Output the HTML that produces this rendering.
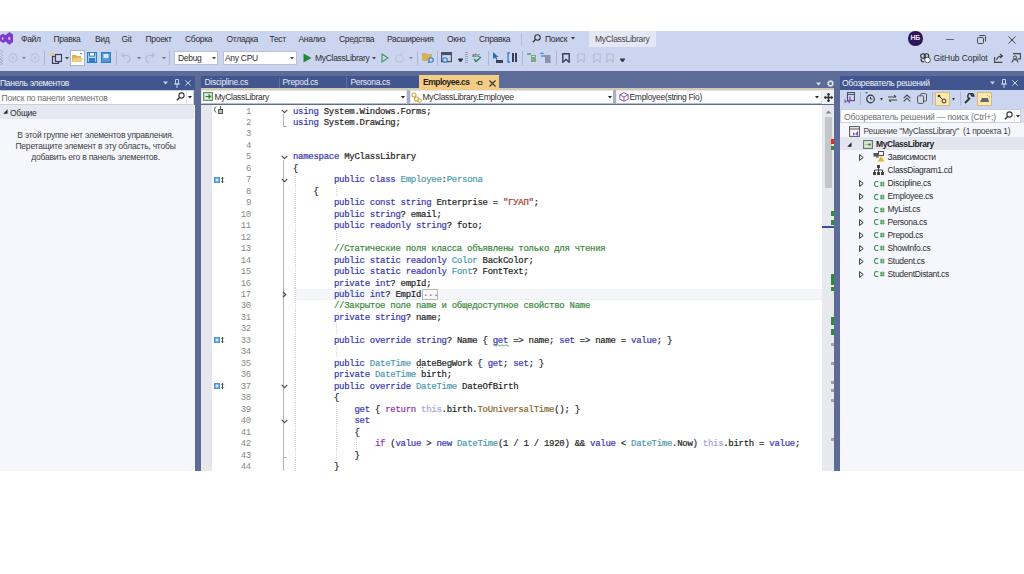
<!DOCTYPE html><html><head><meta charset="utf-8"><style>
*{margin:0;padding:0;box-sizing:border-box}
html,body{width:1024px;height:574px;overflow:hidden;background:#fff}
body{position:relative;font-family:"Liberation Sans",sans-serif}
div,svg{position:absolute}
.t{white-space:pre}
.code{font-family:"Liberation Mono",monospace;white-space:pre}
</style></head><body>

<div style="left:0px;top:31px;width:1024px;height:40px;background:#ccd5f0;"></div>
<div style="left:0px;top:71px;width:1024px;height:400px;background:#5d6b99;"></div>
<svg style="left:0;top:32px" width="14" height="13" viewBox="0 0 14 13"><path d="M9.5 0 L13 2.5 L13 10 L9.5 12.7 L6 10 L5.5 9.5 L3.3 11 L0 9 L0 3.5 L3.3 1.7 L5.5 3.2 L6 2.7 Z" fill="#7d3cc8"/><ellipse cx="9.3" cy="6.4" rx="1.2" ry="1.6" fill="#d9a8f5"/><ellipse cx="2.6" cy="6.4" rx="0.9" ry="1.5" fill="#d0b0f0"/></svg>
<div class="t" style="left:21px;top:34.90px;font-size:8.5px;line-height:8.5px;letter-spacing:-0.3px;color:#2d2d2d;">Файл</div>
<div class="t" style="left:53.5px;top:34.90px;font-size:8.5px;line-height:8.5px;letter-spacing:-0.3px;color:#2d2d2d;">Правка</div>
<div class="t" style="left:95px;top:34.90px;font-size:8.5px;line-height:8.5px;letter-spacing:-0.3px;color:#2d2d2d;">Вид</div>
<div class="t" style="left:121.5px;top:34.90px;font-size:8.5px;line-height:8.5px;letter-spacing:-0.3px;color:#2d2d2d;">Git</div>
<div class="t" style="left:145.5px;top:34.90px;font-size:8.5px;line-height:8.5px;letter-spacing:-0.3px;color:#2d2d2d;">Проект</div>
<div class="t" style="left:185px;top:34.90px;font-size:8.5px;line-height:8.5px;letter-spacing:-0.3px;color:#2d2d2d;">Сборка</div>
<div class="t" style="left:226.5px;top:34.90px;font-size:8.5px;line-height:8.5px;letter-spacing:-0.3px;color:#2d2d2d;">Отладка</div>
<div class="t" style="left:269.5px;top:34.90px;font-size:8.5px;line-height:8.5px;letter-spacing:-0.3px;color:#2d2d2d;">Тест</div>
<div class="t" style="left:298.5px;top:34.90px;font-size:8.5px;line-height:8.5px;letter-spacing:-0.3px;color:#2d2d2d;">Анализ</div>
<div class="t" style="left:339px;top:34.90px;font-size:8.5px;line-height:8.5px;letter-spacing:-0.3px;color:#2d2d2d;">Средства</div>
<div class="t" style="left:387px;top:34.90px;font-size:8.5px;line-height:8.5px;letter-spacing:-0.3px;color:#2d2d2d;">Расширения</div>
<div class="t" style="left:447px;top:34.90px;font-size:8.5px;line-height:8.5px;letter-spacing:-0.3px;color:#2d2d2d;">Окно</div>
<div class="t" style="left:479px;top:34.90px;font-size:8.5px;line-height:8.5px;letter-spacing:-0.3px;color:#2d2d2d;">Справка</div>
<div style="left:521px;top:33px;width:1px;height:12px;background:#b4bcd6;"></div>
<svg style="left:532px;top:34px" width="9" height="9" viewBox="0 0 9 9"><circle cx="5.5" cy="3.5" r="2.7" fill="none" stroke="#333" stroke-width="1.1"/><path d="M3.6 5.4 L0.8 8.2" stroke="#333" stroke-width="1.3"/></svg>
<div class="t" style="left:545px;top:34.90px;font-size:8.5px;line-height:8.5px;letter-spacing:-0.3px;color:#2d2d2d;">Поиск</div>
<svg style="left:571px;top:37px" width="4" height="3"><path d="M0 0H4L2 2.5Z" fill="#333"/></svg>
<div style="left:589px;top:31px;width:67px;height:16px;background:#e4e8f6;"></div>
<div class="t" style="left:595px;top:35.00px;font-size:8.5px;line-height:8.5px;letter-spacing:-0.3px;color:#454545;">MyClassLibrary</div>
<div style="left:908px;top:31px;width:14.5px;height:14.5px;border-radius:50%;background:#2f1456;color:#e8e0f0;font-size:7px;font-weight:bold;line-height:14.5px;text-align:center;letter-spacing:-0.3px">НБ</div>
<div style="left:946px;top:38.5px;width:7.5px;height:1.2px;background:#666;"></div>
<svg style="left:977px;top:35px" width="9" height="9" viewBox="0 0 9 9"><rect x="0.5" y="2.5" width="6" height="6" rx="1" fill="none" stroke="#444"/><path d="M2.5 0.5H7.5Q8.5 .5 8.5 1.5V6.5" fill="none" stroke="#444"/></svg>
<svg style="left:1008px;top:36px" width="8" height="8" viewBox="0 0 8 8"><path d="M0.5 .5L7.5 7.5M7.5 .5L.5 7.5" stroke="#444" stroke-width="1"/></svg>
<div style="left:0;top:50px;width:3px;height:15px;background:repeating-linear-gradient(45deg,#aab2cc 0 1px,transparent 1px 2px)"></div>
<svg style="left:8px;top:53px" width="10" height="10"><circle cx="5" cy="5" r="4.2" fill="none" stroke="#b9bfd2" stroke-width="1"/><circle cx="5" cy="5" r="1.4" fill="#b9bfd2"/></svg>
<svg style="left:22px;top:57px" width="4" height="3"><path d="M0 0H4L2 2.5Z" fill="#888"/></svg>
<svg style="left:30px;top:53px" width="10" height="10"><circle cx="5" cy="5" r="4.2" fill="none" stroke="#b9bfd2" stroke-width="1"/><circle cx="5" cy="5" r="1.4" fill="#b9bfd2"/></svg>
<div style="left:44px;top:51px;width:1px;height:14px;background:#aeb6d2;"></div>
<svg style="left:50px;top:52px" width="12" height="12" viewBox="0 0 12 12"><circle cx="2.5" cy="2.5" r="2" fill="#e7c77c"/><rect x="2.5" y="4.5" width="6" height="7" fill="none" stroke="#3b3b5a" stroke-width="1.2"/><rect x="5.5" y="2.5" width="6" height="7" fill="#cfd6ee" stroke="#3b3b5a" stroke-width="1.2"/></svg>
<svg style="left:65px;top:57px" width="4" height="3"><path d="M0 0H4L2 2.5Z" fill="#444"/></svg>
<div style="left:70px;top:50px;width:15px;height:16px;background:#fdfdfd;border:1px solid #a9b3d0"></div>
<svg style="left:72px;top:53px" width="11" height="10" viewBox="0 0 11 10"><path d="M0 2H4L5 3H9V9H0Z" fill="#d8b45a"/><path d="M1 5H11L9 9H0Z" fill="#efcf7a"/><path d="M8 0 L10 1" stroke="#1f6fb5" stroke-width="1"/></svg>
<svg style="left:87px;top:52px" width="10" height="11" viewBox="0 0 10 11"><rect x="0.6" y="0.6" width="8.8" height="9.8" fill="#c6dcf2" stroke="#2b7fc8" stroke-width="1.2"/><rect x="2.5" y="0.6" width="5" height="3.5" fill="#fff" stroke="#2b7fc8" stroke-width="1"/><rect x="2" y="6" width="6" height="4.4" fill="#2b7fc8"/></svg>
<svg style="left:101px;top:52px" width="10" height="11" viewBox="0 0 10 11"><rect x="0.6" y="0.6" width="8.8" height="9.8" fill="#5d9ad6" stroke="#2b7fc8" stroke-width="1.2"/><rect x="2.5" y="2" width="5" height="4" fill="#d9e8f7"/></svg>
<div style="left:116px;top:51px;width:1px;height:14px;background:#aeb6d2;"></div>
<svg style="left:121px;top:52px" width="10" height="11" viewBox="0 0 10 11"><path d="M3 1 L0.8 3.5 L3.5 5.5 M1 3.5 H5.5 Q9 3.5 9 7 Q9 10 5.5 10.5" fill="none" stroke="#b4bad0" stroke-width="1.2"/></svg>
<svg style="left:137px;top:57px" width="4" height="3"><path d="M0 0H4L2 2.5Z" fill="#777"/></svg>
<svg style="left:145px;top:52px" width="10" height="11" viewBox="0 0 10 11"><path d="M7 1 L9.2 3.5 L6.5 5.5 M9 3.5 H4.5 Q1 3.5 1 7 Q1 10 4.5 10.5" fill="none" stroke="#b4bad0" stroke-width="1.2"/></svg>
<svg style="left:162px;top:57px" width="4" height="3"><path d="M0 0H4L2 2.5Z" fill="#777"/></svg>
<div style="left:169px;top:51px;width:1px;height:14px;background:#aeb6d2;"></div>
<div style="left:174px;top:51px;width:44px;height:14px;background:#fff;border:1px solid #b9c0d8"></div>
<div class="t" style="left:178px;top:54.30px;font-size:8.5px;line-height:8.5px;letter-spacing:-0.3px;color:#2d2d2d;">Debug</div>
<svg style="left:211.5px;top:57px" width="4" height="3"><path d="M0 0H4L2 2.5Z" fill="#444"/></svg>
<div style="left:222.5px;top:51px;width:74px;height:14px;background:#fff;border:1px solid #b9c0d8"></div>
<div class="t" style="left:225px;top:54.30px;font-size:8.5px;line-height:8.5px;letter-spacing:-0.3px;color:#2d2d2d;">Any CPU</div>
<svg style="left:290px;top:57px" width="4" height="3"><path d="M0 0H4L2 2.5Z" fill="#444"/></svg>
<svg style="left:302.5px;top:53px" width="9" height="10"><path d="M0.5 0.5 L8.5 5 L0.5 9.5Z" fill="#1f8a3a"/></svg>
<div class="t" style="left:315px;top:54.30px;font-size:8.5px;line-height:8.5px;letter-spacing:-0.3px;color:#2d2d2d;">MyClassLibrary</div>
<svg style="left:372px;top:57px" width="4" height="3"><path d="M0 0H4L2 2.5Z" fill="#444"/></svg>
<svg style="left:380.5px;top:53px" width="8" height="10"><path d="M1 1 L7 5 L1 9Z" fill="none" stroke="#3a9a55" stroke-width="1.1"/></svg>
<svg style="left:395px;top:52px" width="10" height="11"><circle cx="4.5" cy="6.5" r="3.8" fill="none" stroke="#c1c6d6" stroke-width="1.6"/><path d="M5 3 L8 0" stroke="#c1c6d6" stroke-width="1.3"/></svg>
<svg style="left:409px;top:57px" width="4" height="3"><path d="M0 0H4L2 2.5Z" fill="#888"/></svg>
<div style="left:417px;top:51px;width:1px;height:14px;background:#aeb6d2;"></div>
<svg style="left:421.5px;top:52px" width="12" height="11" viewBox="0 0 12 11"><path d="M0 1H4L5 2H10V9H0Z" fill="#d7b15a"/><circle cx="9" cy="8" r="2.2" fill="#ccd5f0" stroke="#2b7fc8" stroke-width="1.1"/><path d="M7.3 9.7 L6 11" stroke="#2b7fc8" stroke-width="1.2"/></svg>
<div style="left:437px;top:51px;width:1px;height:14px;background:#aeb6d2;"></div>
<svg style="left:441px;top:52px" width="11" height="11" viewBox="0 0 11 11"><rect x="0.6" y="0.6" width="9.8" height="9" fill="none" stroke="#4b4f66" stroke-width="1.2"/><rect x="0.6" y="0.6" width="9.8" height="2.5" fill="#4b4f66"/><circle cx="4" cy="8" r="2.3" fill="#ccd5f0" stroke="#2b7fc8" stroke-width="1.1"/></svg>
<svg style="left:457.5px;top:58px" width="5" height="5"><path d="M0 0H5M0.5 1.5H4.5L2.5 4Z" stroke="#333" fill="#333" stroke-width="1"/></svg>
<div style="left:465px;top:52px;width:3px;height:12px;background:repeating-linear-gradient(#9aa3c0 0 1px,transparent 1px 2px)"></div>
<svg style="left:472px;top:53px" width="10" height="10" viewBox="0 0 10 10"><text x="0" y="4" font-size="5" font-family="Liberation Sans" fill="#444">abc</text><path d="M2 6 L4 8.5 L9 4" fill="none" stroke="#1f8a3a" stroke-width="1.3"/></svg>
<div style="left:487.5px;top:51px;width:1px;height:14px;background:#aeb6d2;"></div>
<svg style="left:492px;top:52px" width="11" height="11" viewBox="0 0 11 11"><path d="M1 0 L1 7 L3 5.5 L4.5 8 L5.5 7.5 L4.3 5 L6.5 5Z" fill="#1f6fb5"/><rect x="4" y="8" width="7" height="3" fill="#3d3d55"/></svg>
<svg style="left:506.5px;top:52px" width="11" height="11" viewBox="0 0 11 11"><path d="M3 1H1V10H3" fill="none" stroke="#2b7fc8" stroke-width="1.3"/><rect x="5" y="1" width="2" height="9" fill="#3d3d55"/><rect x="8" y="1" width="2" height="9" fill="#3d3d55"/></svg>
<div style="left:522px;top:51px;width:1px;height:14px;background:#aeb6d2;"></div>
<svg style="left:527px;top:53px" width="10" height="10" viewBox="0 0 10 10"><path d="M0 1H4" stroke="#3a9a55" stroke-width="1.3"/><rect x="4" y="2" width="5" height="7" fill="#7fa88a"/><rect x="5" y="3" width="3" height="1" fill="#cde"/></svg>
<svg style="left:540px;top:52px" width="11" height="11" viewBox="0 0 11 11"><path d="M0.5 2 Q2 0 3.5 2" fill="none" stroke="#2b7fc8" stroke-width="1.2"/><path d="M1 4H5" stroke="#2b7fc8" stroke-width="1.2"/><rect x="5" y="3" width="5.5" height="8" fill="#8c93a8"/></svg>
<div style="left:556px;top:51px;width:1px;height:14px;background:#aeb6d2;"></div>
<svg style="left:562px;top:53px" width="8" height="10" viewBox="0 0 8 10"><path d="M0.8 0.8H7.2V9.2L4 6.5L0.8 9.2Z" fill="none" stroke="#3d3d55" stroke-width="1.4"/></svg>
<svg style="left:577px;top:53px" width="9" height="10" viewBox="0 0 9 10"><path d="M0.8 0.8H7.2V9.2L4 6.5L0.8 9.2Z" fill="none" stroke="#b9bfd2" stroke-width="1.3"/></svg>
<svg style="left:592.5px;top:53px" width="9" height="10" viewBox="0 0 9 10"><path d="M0.8 0.8H7.2V9.2L4 6.5L0.8 9.2Z" fill="none" stroke="#b9bfd2" stroke-width="1.3"/></svg>
<svg style="left:606px;top:53px" width="9" height="10" viewBox="0 0 9 10"><path d="M0.8 0.8H7.2V9.2L4 6.5L0.8 9.2Z" fill="none" stroke="#b9bfd2" stroke-width="1.3"/></svg>
<svg style="left:620px;top:58px" width="5" height="5"><path d="M0 0H5M0.5 1.5H4.5L2.5 4Z" stroke="#333" fill="#333" stroke-width="1"/></svg>
<svg style="left:920px;top:53px" width="11" height="10" viewBox="0 0 11 10"><circle cx="3" cy="3" r="2.3" fill="none" stroke="#333" stroke-width="1.1"/><circle cx="6.5" cy="3" r="2.3" fill="none" stroke="#333" stroke-width="1.1"/><path d="M1 6 Q1 9 4 9" fill="none" stroke="#333" stroke-width="1.1"/><circle cx="7.5" cy="7" r="2.8" fill="#fff" stroke="#333" stroke-width="0.8"/></svg>
<div class="t" style="left:933.5px;top:54.30px;font-size:8.5px;line-height:8.5px;letter-spacing:-0.08px;color:#2d2d2d;">GitHub Copilot</div>
<svg style="left:994px;top:53px" width="10" height="10" viewBox="0 0 10 10"><path d="M0.6 4V9.4H8.4" fill="none" stroke="#444" stroke-width="1.1"/><path d="M2.5 7 Q3.5 3 8 3 M6 1 L8.5 3 L6 5" fill="none" stroke="#444" stroke-width="1.1"/></svg>
<svg style="left:1011px;top:53px" width="10" height="10" viewBox="0 0 10 10"><path d="M2 0.6H9.4V6H6" fill="none" stroke="#444" stroke-width="1.1"/><circle cx="4" cy="4.5" r="1.6" fill="none" stroke="#444" stroke-width="1"/><path d="M0.8 9.5 Q1.5 6.5 4 6.5 Q6.5 6.5 7 9.5" fill="none" stroke="#444" stroke-width="1.1"/></svg>
<div style="left:0px;top:76px;width:195px;height:14px;background:#41558f;"></div>
<div class="t" style="left:0px;top:78.80px;font-size:8.5px;line-height:8.5px;letter-spacing:-0.3px;color:#f0f3fa;">Панель элементов</div>
<svg style="left:163px;top:81px" width="5" height="4"><path d="M0 0.5H5L2.5 3.5Z" fill="#c9d1ea"/></svg>
<svg style="left:173.5px;top:79px" width="6" height="9" viewBox="0 0 6 9"><path d="M1.5 0.5H4.5V5H1.5Z M0 5H6 M3 5V9" fill="none" stroke="#c9d1ea" stroke-width="1"/></svg>
<svg style="left:184.5px;top:80px" width="6" height="6"><path d="M0.3 .3L5.7 5.7M5.7 .3L.3 5.7" stroke="#c9d1ea" stroke-width="1"/></svg>
<div style="left:0px;top:90px;width:194px;height:14.5px;background:#ffffff;border:1px solid #c9cfde;border-left:none"></div>
<div class="t" style="left:1.5px;top:93.60px;font-size:8.5px;line-height:8.5px;letter-spacing:-0.17px;color:#6d6d6d;">Поиск по панели элементов</div>
<svg style="left:176px;top:92px" width="9" height="9" viewBox="0 0 9 9"><circle cx="5.5" cy="3.5" r="2.6" fill="none" stroke="#333" stroke-width="1.1"/><path d="M3.6 5.4 L0.8 8.2" stroke="#333" stroke-width="1.4"/></svg>
<div style="left:185.5px;top:91px;width:1px;height:12.5px;background:#e1e4ec;"></div>
<svg style="left:187.5px;top:96px" width="4" height="3"><path d="M0 0H4L2 2.5Z" fill="#222"/></svg>
<div style="left:0px;top:104.5px;width:195px;height:366.5px;background:#f5f7fd;"></div>
<div style="left:0px;top:105px;width:194px;height:14px;background:#e5e8f0;"></div>
<svg style="left:3px;top:109px" width="5" height="5"><path d="M4.5 0.3V4.7H0.3Z" fill="#222"/></svg>
<div class="t" style="left:10px;top:108.50px;font-size:8.5px;line-height:8.5px;letter-spacing:-0.3px;color:#2d2d2d;">Общие</div>
<div class="t" style="left:0;width:191px;text-align:center;top:131.10px;font-size:8.5px;line-height:8.5px;letter-spacing:-0.21px;color:#3c3c3c">В этой группе нет элементов управления.</div>
<div class="t" style="left:0;width:191px;text-align:center;top:141.80px;font-size:8.5px;line-height:8.5px;letter-spacing:-0.21px;color:#3c3c3c">Перетащите элемент в эту область, чтобы</div>
<div class="t" style="left:0;width:191px;text-align:center;top:152.60px;font-size:8.5px;line-height:8.5px;letter-spacing:-0.21px;color:#3c3c3c">добавить его в панель элементов.</div>
<div style="left:201px;top:76px;width:78px;height:13px;background:#41558f;"></div>
<div class="t" style="left:204.5px;top:77.60px;font-size:8.5px;line-height:8.5px;letter-spacing:-0.3px;color:#e8ecf7;">Discipline.cs</div>
<div style="left:279px;top:76px;width:67px;height:13px;background:#41558f;"></div>
<div class="t" style="left:282.5px;top:77.60px;font-size:8.5px;line-height:8.5px;letter-spacing:-0.3px;color:#e8ecf7;">Prepod.cs</div>
<div style="left:346px;top:76px;width:73px;height:13px;background:#41558f;"></div>
<div class="t" style="left:350.5px;top:77.60px;font-size:8.5px;line-height:8.5px;letter-spacing:-0.3px;color:#e8ecf7;">Persona.cs</div>
<div style="left:279px;top:77px;width:1px;height:11px;background:#5d6ea0;"></div>
<div style="left:346px;top:77px;width:1px;height:11px;background:#5d6ea0;"></div>
<div style="left:419px;top:75px;width:80px;height:15px;background:#f5cc84;"></div>
<div class="t" style="left:423px;top:77.80px;font-size:8.5px;line-height:8.5px;letter-spacing:-0.5px;color:#1e1e1e;font-weight:bold">Employee.cs</div>
<svg style="left:476px;top:80px" width="7" height="6" viewBox="0 0 7 6"><path d="M0 3H2.5 M2.5 1V5 M2.5 1.5H6V4.5H2.5" fill="none" stroke="#333" stroke-width="0.9"/></svg>
<svg style="left:488.5px;top:79.5px" width="7" height="7"><path d="M0.5 .5L6.5 6.5M6.5 .5L.5 6.5" stroke="#333" stroke-width="1.1"/></svg>
<div style="left:201px;top:88.2px;width:633px;height:1.5px;background:#d2c9b0;"></div>
<svg style="left:816px;top:81.5px" width="5" height="4"><path d="M0 0.5H5L2.5 3.5Z" fill="#dfe4f3"/></svg>
<svg style="left:827px;top:79.5px" width="7" height="7" viewBox="0 0 7 7"><circle cx="3.5" cy="3.5" r="2.2" fill="none" stroke="#dfe4f3" stroke-width="1.4"/><circle cx="3.5" cy="3.5" r="3.2" fill="none" stroke="#dfe4f3" stroke-width="0.8" stroke-dasharray="1 1"/></svg>
<div style="left:419px;top:88.3px;width:80px;height:1.4px;background:#f5cc84;"></div>
<div style="left:201px;top:89.7px;width:633px;height:14.8px;background:#eef0f6;"></div>
<div style="left:201px;top:89.7px;width:206px;height:14.3px;background:#fff;border:1px solid #e3e6ee;border-bottom-color:#b9bdc8"></div>
<svg style="left:203px;top:92px" width="10" height="9" viewBox="0 0 10 9"><rect x="0.6" y="0.6" width="8.8" height="7.8" fill="#dfeadf" stroke="#5a8a5a" stroke-width="1.1"/><path d="M2.5 4.5H7.5 M5.5 2.5L7.5 4.5L5.5 6.5" fill="none" stroke="#2f7d32" stroke-width="1.1"/></svg>
<div class="t" style="left:214.5px;top:92.60px;font-size:8.5px;line-height:8.5px;letter-spacing:-0.3px;color:#2d2d2d;">MyClassLibrary</div>
<svg style="left:400.5px;top:96px" width="4" height="3"><path d="M0 0H4L2 2.5Z" fill="#222"/></svg>
<div style="left:407px;top:89.7px;width:2.5px;height:14.8px;background:#a9b0c6;"></div>
<div style="left:409.5px;top:89.7px;width:204px;height:14.3px;background:#fff;border:1px solid #e3e6ee;border-bottom-color:#b9bdc8"></div>
<svg style="left:411px;top:91.5px" width="11" height="11" viewBox="0 0 11 11"><circle cx="3" cy="3" r="2" fill="none" stroke="#c9a93a" stroke-width="1.1"/><circle cx="5.5" cy="7" r="2" fill="none" stroke="#c9a93a" stroke-width="1.1"/><circle cx="8.5" cy="8.5" r="1.8" fill="none" stroke="#c9a93a" stroke-width="1.1"/></svg>
<div class="t" style="left:422.5px;top:92.60px;font-size:8.5px;line-height:8.5px;letter-spacing:-0.3px;color:#2d2d2d;">MyClassLibrary.Employee</div>
<svg style="left:607.5px;top:96px" width="4" height="3"><path d="M0 0H4L2 2.5Z" fill="#222"/></svg>
<div style="left:613px;top:89.7px;width:3px;height:14.8px;background:#a9b0c6;"></div>
<div style="left:616px;top:89.7px;width:205.5px;height:14.3px;background:#fff;border:1px solid #e3e6ee;border-bottom-color:#b9bdc8"></div>
<svg style="left:618.5px;top:92px" width="10" height="10" viewBox="0 0 10 10"><path d="M5 0.7L9.2 2.8V7.2L5 9.3L0.8 7.2V2.8Z M0.8 2.8L5 5L9.2 2.8 M5 5V9.3" fill="none" stroke="#8a5fb5" stroke-width="1"/></svg>
<div class="t" style="left:629.5px;top:92.60px;font-size:8.5px;line-height:8.5px;letter-spacing:-0.3px;color:#2d2d2d;">Employee(string Fio)</div>
<svg style="left:815px;top:96px" width="4" height="3"><path d="M0 0H4L2 2.5Z" fill="#222"/></svg>
<div style="left:821.5px;top:89.7px;width:12.5px;height:14.8px;background:#f0f1f5;"></div>
<svg style="left:823.5px;top:92.5px" width="9" height="9" viewBox="0 0 9 9"><path d="M4.5 0V9 M0 4.5H9" stroke="#333" stroke-width="1.6"/><path d="M4.5 0L2.8 2H6.2Z M4.5 9L2.8 7H6.2Z M0 4.5L2 2.8V6.2Z M9 4.5L7 2.8V6.2Z" fill="#333"/></svg>
<div style="left:201px;top:104.5px;width:620.5px;height:366.5px;background:#ffffff;"></div>
<div style="left:201px;top:104.5px;width:10.5px;height:366.5px;background:#e6e7ed;"></div>
<div style="left:201px;top:104.5px;width:620.5px;height:366.5px;overflow:hidden">
<div style="left:94.5px;top:184.12px;width:526.0px;height:11.6px;background:#f4f6fa;border:1px solid #eef1f6"></div>
<div style="left:94px;top:69.22px;width:1px;height:11.47px;background:repeating-linear-gradient(#d6d6d6 0 1px,transparent 1px 2px)"></div>
<div style="left:94px;top:80.69px;width:1px;height:11.47px;background:repeating-linear-gradient(#d6d6d6 0 1px,transparent 1px 2px)"></div>
<div style="left:94px;top:92.16px;width:1px;height:11.47px;background:repeating-linear-gradient(#d6d6d6 0 1px,transparent 1px 2px)"></div>
<div style="left:94px;top:103.63px;width:1px;height:11.47px;background:repeating-linear-gradient(#d6d6d6 0 1px,transparent 1px 2px)"></div>
<div style="left:94px;top:115.10px;width:1px;height:11.47px;background:repeating-linear-gradient(#d6d6d6 0 1px,transparent 1px 2px)"></div>
<div style="left:94px;top:126.57px;width:1px;height:11.47px;background:repeating-linear-gradient(#d6d6d6 0 1px,transparent 1px 2px)"></div>
<div style="left:94px;top:138.04px;width:1px;height:11.47px;background:repeating-linear-gradient(#d6d6d6 0 1px,transparent 1px 2px)"></div>
<div style="left:94px;top:149.51px;width:1px;height:11.47px;background:repeating-linear-gradient(#d6d6d6 0 1px,transparent 1px 2px)"></div>
<div style="left:94px;top:160.98px;width:1px;height:11.47px;background:repeating-linear-gradient(#d6d6d6 0 1px,transparent 1px 2px)"></div>
<div style="left:94px;top:172.45px;width:1px;height:11.47px;background:repeating-linear-gradient(#d6d6d6 0 1px,transparent 1px 2px)"></div>
<div style="left:94px;top:183.92px;width:1px;height:11.47px;background:repeating-linear-gradient(#d6d6d6 0 1px,transparent 1px 2px)"></div>
<div style="left:94px;top:195.39px;width:1px;height:11.47px;background:repeating-linear-gradient(#d6d6d6 0 1px,transparent 1px 2px)"></div>
<div style="left:94px;top:206.86px;width:1px;height:11.47px;background:repeating-linear-gradient(#d6d6d6 0 1px,transparent 1px 2px)"></div>
<div style="left:94px;top:218.33px;width:1px;height:11.47px;background:repeating-linear-gradient(#d6d6d6 0 1px,transparent 1px 2px)"></div>
<div style="left:94px;top:229.80px;width:1px;height:11.47px;background:repeating-linear-gradient(#d6d6d6 0 1px,transparent 1px 2px)"></div>
<div style="left:94px;top:241.27px;width:1px;height:11.47px;background:repeating-linear-gradient(#d6d6d6 0 1px,transparent 1px 2px)"></div>
<div style="left:94px;top:252.74px;width:1px;height:11.47px;background:repeating-linear-gradient(#d6d6d6 0 1px,transparent 1px 2px)"></div>
<div style="left:94px;top:264.21px;width:1px;height:11.47px;background:repeating-linear-gradient(#d6d6d6 0 1px,transparent 1px 2px)"></div>
<div style="left:94px;top:275.68px;width:1px;height:11.47px;background:repeating-linear-gradient(#d6d6d6 0 1px,transparent 1px 2px)"></div>
<div style="left:94px;top:287.15px;width:1px;height:11.47px;background:repeating-linear-gradient(#d6d6d6 0 1px,transparent 1px 2px)"></div>
<div style="left:94px;top:298.62px;width:1px;height:11.47px;background:repeating-linear-gradient(#d6d6d6 0 1px,transparent 1px 2px)"></div>
<div style="left:94px;top:310.09px;width:1px;height:11.47px;background:repeating-linear-gradient(#d6d6d6 0 1px,transparent 1px 2px)"></div>
<div style="left:94px;top:321.56px;width:1px;height:11.47px;background:repeating-linear-gradient(#d6d6d6 0 1px,transparent 1px 2px)"></div>
<div style="left:94px;top:333.03px;width:1px;height:11.47px;background:repeating-linear-gradient(#d6d6d6 0 1px,transparent 1px 2px)"></div>
<div style="left:94px;top:344.50px;width:1px;height:11.47px;background:repeating-linear-gradient(#d6d6d6 0 1px,transparent 1px 2px)"></div>
<div style="left:94px;top:355.97px;width:1px;height:11.47px;background:repeating-linear-gradient(#d6d6d6 0 1px,transparent 1px 2px)"></div>
<div style="left:134.5px;top:80.69px;width:1px;height:11.47px;background:repeating-linear-gradient(#d6d6d6 0 1px,transparent 1px 2px)"></div>
<div style="left:134.5px;top:126.57px;width:1px;height:11.47px;background:repeating-linear-gradient(#d6d6d6 0 1px,transparent 1px 2px)"></div>
<div style="left:134.5px;top:218.33px;width:1px;height:11.47px;background:repeating-linear-gradient(#d6d6d6 0 1px,transparent 1px 2px)"></div>
<div style="left:134.5px;top:241.27px;width:1px;height:11.47px;background:repeating-linear-gradient(#d6d6d6 0 1px,transparent 1px 2px)"></div>
<div style="left:134.5px;top:298.62px;width:1px;height:11.47px;background:repeating-linear-gradient(#d6d6d6 0 1px,transparent 1px 2px)"></div>
<div style="left:134.5px;top:310.09px;width:1px;height:11.47px;background:repeating-linear-gradient(#d6d6d6 0 1px,transparent 1px 2px)"></div>
<div style="left:134.5px;top:321.56px;width:1px;height:11.47px;background:repeating-linear-gradient(#d6d6d6 0 1px,transparent 1px 2px)"></div>
<div style="left:134.5px;top:333.03px;width:1px;height:11.47px;background:repeating-linear-gradient(#d6d6d6 0 1px,transparent 1px 2px)"></div>
<div style="left:134.5px;top:344.50px;width:1px;height:11.47px;background:repeating-linear-gradient(#d6d6d6 0 1px,transparent 1px 2px)"></div>
<div style="left:155px;top:333.03px;width:1px;height:11.47px;background:repeating-linear-gradient(#d6d6d6 0 1px,transparent 1px 2px)"></div>
<div class="code ln" style="left:44.88px;top:1.0px">1</div>
<div class="code cl" style="left:92px;top:1.0px"><span class="k">using</span> System.Windows.Forms;</div>
<div class="code ln" style="left:44.88px;top:12.469999999999999px">2</div>
<div class="code cl" style="left:92px;top:12.469999999999999px"><span class="k">using</span> System.Drawing;</div>
<div class="code ln" style="left:44.88px;top:23.939999999999998px">3</div>
<div class="code ln" style="left:44.88px;top:35.41px">4</div>
<div class="code ln" style="left:44.88px;top:46.879999999999995px">5</div>
<div class="code cl" style="left:92px;top:46.879999999999995px"><span class="k">namespace</span> MyClassLibrary</div>
<div class="code ln" style="left:44.88px;top:58.349999999999994px">6</div>
<div class="code cl" style="left:92px;top:58.349999999999994px">{</div>
<div class="code ln" style="left:44.88px;top:69.82000000000002px">7</div>
<div class="code cl" style="left:92px;top:69.82000000000002px">        <span class="k">public</span> <span class="k">class</span> <span class="ty">Employee</span>:<span class="ty">Persona</span></div>
<div class="code ln" style="left:44.88px;top:81.28999999999999px">8</div>
<div class="code cl" style="left:92px;top:81.28999999999999px">    {</div>
<div class="code ln" style="left:44.88px;top:92.76000000000002px">9</div>
<div class="code cl" style="left:92px;top:92.76000000000002px">        <span class="k">public</span> <span class="k">const</span> <span class="k">string</span> Enterprise = <span class="s">&quot;ГУАП&quot;</span>;</div>
<div class="code ln" style="left:39.76px;top:104.22999999999999px">10</div>
<div class="code cl" style="left:92px;top:104.22999999999999px">        <span class="k">public</span> <span class="k">string</span>? email;</div>
<div class="code ln" style="left:39.76px;top:115.70000000000002px">11</div>
<div class="code cl" style="left:92px;top:115.70000000000002px">        <span class="k">public</span> <span class="k">readonly</span> <span class="k">string</span>? foto;</div>
<div class="code ln" style="left:39.76px;top:127.16999999999999px">12</div>
<div class="code ln" style="left:39.76px;top:138.64000000000001px">13</div>
<div class="code cl" style="left:92px;top:138.64000000000001px">        <span class="cm">//Статические поля класса объявлены только для чтения</span></div>
<div class="code ln" style="left:39.76px;top:150.10999999999999px">14</div>
<div class="code cl" style="left:92px;top:150.10999999999999px">        <span class="k">public</span> <span class="k">static</span> <span class="k">readonly</span> <span class="ty">Color</span> BackColor;</div>
<div class="code ln" style="left:39.76px;top:161.58000000000004px">15</div>
<div class="code cl" style="left:92px;top:161.58000000000004px">        <span class="k">public</span> <span class="k">static</span> <span class="k">readonly</span> <span class="ty">Font</span>? FontText;</div>
<div class="code ln" style="left:39.76px;top:173.05000000000007px">16</div>
<div class="code cl" style="left:92px;top:173.05000000000007px">        <span class="k">private</span> <span class="k">int</span>? empId;</div>
<div class="code ln" style="left:39.76px;top:184.52000000000004px">17</div>
<div class="code cl" style="left:92px;top:184.52000000000004px">        <span class="k">public</span> <span class="k">int</span>? EmpId</div>
<div class="code ln" style="left:39.76px;top:195.99px">30</div>
<div class="code cl" style="left:92px;top:195.99px">        <span class="cm">//Закрытое поле name и общедоступное свойство Name</span></div>
<div class="code ln" style="left:39.76px;top:207.46000000000004px">31</div>
<div class="code cl" style="left:92px;top:207.46000000000004px">        <span class="k">private</span> <span class="k">string</span>? name;</div>
<div class="code ln" style="left:39.76px;top:218.93000000000006px">32</div>
<div class="code ln" style="left:39.76px;top:230.40000000000003px">33</div>
<div class="code cl" style="left:92px;top:230.40000000000003px">        <span class="k">public</span> <span class="k">override</span> <span class="k">string</span>? Name { <span class="k">get</span> =&gt; name; <span class="k">set</span> =&gt; name = <span class="k">value</span>; }</div>
<div class="code ln" style="left:39.76px;top:241.87px">34</div>
<div class="code ln" style="left:39.76px;top:253.34000000000003px">35</div>
<div class="code cl" style="left:92px;top:253.34000000000003px">        <span class="k">public</span> <span class="ty">DateTime</span> dateBegWork { <span class="k">get</span>; <span class="k">set</span>; }</div>
<div class="code ln" style="left:39.76px;top:264.81000000000006px">36</div>
<div class="code cl" style="left:92px;top:264.81000000000006px">        <span class="k">private</span> <span class="ty">DateTime</span> birth;</div>
<div class="code ln" style="left:39.76px;top:276.2800000000001px">37</div>
<div class="code cl" style="left:92px;top:276.2800000000001px">        <span class="k">public</span> <span class="k">override</span> <span class="ty">DateTime</span> DateOfBirth</div>
<div class="code ln" style="left:39.76px;top:287.75px">38</div>
<div class="code cl" style="left:92px;top:287.75px">        {</div>
<div class="code ln" style="left:39.76px;top:299.22px">39</div>
<div class="code cl" style="left:92px;top:299.22px">            <span class="k">get</span> { <span class="c">return</span> <span class="th">this</span>.birth.<span class="me">ToUniversalTime</span>(); }</div>
<div class="code ln" style="left:39.76px;top:310.69000000000005px">40</div>
<div class="code cl" style="left:92px;top:310.69000000000005px">            <span class="k">set</span></div>
<div class="code ln" style="left:39.76px;top:322.1600000000001px">41</div>
<div class="code cl" style="left:92px;top:322.1600000000001px">            {</div>
<div class="code ln" style="left:39.76px;top:333.63px">42</div>
<div class="code cl" style="left:92px;top:333.63px">                <span class="c">if</span> (<span class="k">value</span> &gt; <span class="k">new</span> <span class="ty">DateTime</span>(1 / 1 / 1920) &amp;&amp; <span class="k">value</span> &lt; <span class="ty">DateTime</span>.Now) <span class="th">this</span>.birth = <span class="k">value</span>;</div>
<div class="code ln" style="left:39.76px;top:345.1px">43</div>
<div class="code cl" style="left:92px;top:345.1px">            }</div>
<div class="code ln" style="left:39.76px;top:356.57000000000005px">44</div>
<div class="code cl" style="left:92px;top:356.57000000000005px">        }</div>
<div style="left:220.5px;top:184.42000000000002px;width:16px;height:11px;border:1px solid #b8b8b8;background:#f7f7f7"></div>
<div class="code" style="left:222px;top:183.92000000000002px;color:#777">...</div>
<svg style="left:80px;top:4.400000000000006px" width="7" height="5"><path d="M0.7 0.9L3.5 3.7L6.3 0.9" fill="none" stroke="#505050" stroke-width="1.25"/></svg>
<div style="left:82px;top:9.400000000000006px;width:1px;height:13.469999999999999px;background:#b4b4b4"></div>
<div style="left:82px;top:21.870000000000005px;width:4px;height:1px;background:#b4b4b4"></div>
<svg style="left:80px;top:50.28px" width="7" height="5"><path d="M0.7 0.9L3.5 3.7L6.3 0.9" fill="none" stroke="#505050" stroke-width="1.25"/></svg>
<div style="left:82px;top:55.28px;width:1px;height:311.69000000000005px;background:#b4b4b4"></div>
<div style="left:82px;top:352.50px;width:4px;height:1px;background:#b8b8b8"></div>
<svg style="left:80px;top:73.22000000000003px" width="7" height="5"><path d="M0.7 0.9L3.5 3.7L6.3 0.9" fill="none" stroke="#505050" stroke-width="1.25"/></svg>
<svg style="left:81px;top:186.42000000000002px" width="5" height="7"><path d="M0.9 0.7L3.7 3.5L0.9 6.3" fill="none" stroke="#505050" stroke-width="1.25"/></svg>
<svg style="left:80px;top:279.68000000000006px" width="7" height="5"><path d="M0.7 0.9L3.5 3.7L6.3 0.9" fill="none" stroke="#505050" stroke-width="1.25"/></svg>
<svg style="left:80px;top:314.09000000000003px" width="7" height="5"><path d="M0.7 0.9L3.5 3.7L6.3 0.9" fill="none" stroke="#505050" stroke-width="1.25"/></svg>
<svg style="left:12.5px;top:72.22000000000003px" width="11" height="6" viewBox="0 0 11 6"><rect x="0" y="0" width="6" height="6" fill="#4d8fd6"/><rect x="1.5" y="1.5" width="3" height="3" fill="#d5e6f7"/><path d="M8.5 0.3V5.7 M7.3 1.5L8.5 0.3L9.7 1.5 M7.3 4.5L8.5 5.7L9.7 4.5" fill="none" stroke="#333" stroke-width="0.9"/></svg>
<svg style="left:12.5px;top:232.8px" width="11" height="6" viewBox="0 0 11 6"><rect x="0" y="0" width="6" height="6" fill="#4d8fd6"/><rect x="1.5" y="1.5" width="3" height="3" fill="#d5e6f7"/><path d="M8.5 0.3V5.7 M7.3 1.5L8.5 0.3L9.7 1.5 M7.3 4.5L8.5 5.7L9.7 4.5" fill="none" stroke="#333" stroke-width="0.9"/></svg>
<svg style="left:12.5px;top:278.68000000000006px" width="11" height="6" viewBox="0 0 11 6"><rect x="0" y="0" width="6" height="6" fill="#4d8fd6"/><rect x="1.5" y="1.5" width="3" height="3" fill="#d5e6f7"/><path d="M8.5 0.3V5.7 M7.3 1.5L8.5 0.3L9.7 1.5 M7.3 4.5L8.5 5.7L9.7 4.5" fill="none" stroke="#333" stroke-width="0.9"/></svg>
<svg style="left:13px;top:0.5px" width="10" height="10" viewBox="0 0 10 10"><path d="M2 1.5 Q0.5 3 0.5 4.5 Q0.5 6 2 7.5" fill="none" stroke="#444" stroke-width="0.9"/><rect x="4" y="4" width="5" height="5" fill="#555"/><rect x="5" y="5" width="3" height="3" fill="#bbb"/><path d="M6.5 1V4" stroke="#444" stroke-width="0.8"/></svg>
<svg style="left:291.68px;top:239.8px" width="16" height="3"><path d="M0 1.5 Q1 0 2 1.5 T4 1.5 T6 1.5 T8 1.5 T10 1.5 T12 1.5 T14 1.5 T16 1.5" fill="none" stroke="#3a9a3a" stroke-width="0.8"/></svg>
<div style="left:215.5px;top:262.5px;width:7px;height:1px;background:repeating-linear-gradient(90deg,#777 0 1px,transparent 1px 2.5px)"></div>
</div>
<div style="left:821.5px;top:104.5px;width:12.5px;height:366.5px;background:#e8e9ee;"></div>
<svg style="left:824.5px;top:109.5px" width="7" height="4"><path d="M0.5 3.5L3.5 0.5L6.5 3.5Z" fill="#888"/></svg>
<div style="left:824.5px;top:117px;width:7px;height:71px;background:#c5c6cc;"></div>
<div style="left:830.5px;top:139px;width:3.5px;height:5px;background:#d9302c;"></div>
<div style="left:830.5px;top:146px;width:3.5px;height:4px;background:#2e8b3a;"></div>
<div style="left:830.5px;top:211px;width:3.5px;height:5px;background:#2e8b3a;"></div>
<div style="left:830.5px;top:219.5px;width:3.5px;height:5.0px;background:#2e8b3a;"></div>
<div style="left:830.5px;top:274px;width:3.5px;height:11px;background:#2e8b3a;"></div>
<div style="left:830.5px;top:287px;width:3.5px;height:4px;background:#2e8b3a;"></div>
<div style="left:830.5px;top:316.5px;width:3.5px;height:8.5px;background:#2e8b3a;"></div>
<div style="left:830.5px;top:329px;width:3.5px;height:6px;background:#2e8b3a;"></div>
<div style="left:831px;top:343px;width:2.5px;height:2.5px;background:#a0a0a0;"></div>
<div style="left:831px;top:362px;width:2.5px;height:2.5px;background:#a0a0a0;"></div>
<div style="left:831px;top:381px;width:2.5px;height:2.5px;background:#a0a0a0;"></div>
<div style="left:831px;top:389px;width:2.5px;height:2.5px;background:#a0a0a0;"></div>
<div style="left:831px;top:399px;width:2.5px;height:2.5px;background:#a0a0a0;"></div>
<div style="left:831px;top:438px;width:2.5px;height:2.5px;background:#a0a0a0;"></div>
<div style="left:822px;top:226.3px;width:12px;height:1.5px;background:#3b4ea0;"></div>
<div style="left:840px;top:76px;width:184px;height:13.5px;background:#41558f;"></div>
<div class="t" style="left:842px;top:78.70px;font-size:8.5px;line-height:8.5px;letter-spacing:-0.3px;color:#f0f3fa;">Обозреватель решений</div>
<svg style="left:990px;top:81px" width="5" height="4"><path d="M0 0.5H5L2.5 3.5Z" fill="#c9d1ea"/></svg>
<svg style="left:1000.5px;top:79px" width="6" height="9" viewBox="0 0 6 9"><path d="M1.5 0.5H4.5V5H1.5Z M0 5H6 M3 5V9" fill="none" stroke="#c9d1ea" stroke-width="1"/></svg>
<svg style="left:1012px;top:80px" width="6" height="6"><path d="M0.3 .3L5.7 5.7M5.7 .3L.3 5.7" stroke="#c9d1ea" stroke-width="1"/></svg>
<div style="left:840px;top:89.5px;width:184px;height:19px;background:#ccd5f0;"></div>
<svg style="left:844px;top:92px" width="11" height="12" viewBox="0 0 11 12"><rect x="3.5" y="0.6" width="7" height="8" fill="#cfd6ee" stroke="#4b4f66" stroke-width="1.1"/><path d="M3.5 2.5H10.5 M6 4.5V8" stroke="#4b4f66" stroke-width="0.9"/><path d="M0.5 7L3 9.5L0.5 11.5Z M3 9.5L6 6.5V11.5Z" fill="#8a4fd0"/></svg>
<div style="left:859.5px;top:92px;width:1px;height:13px;background:#aeb6d2;"></div>
<svg style="left:865px;top:92px" width="10" height="12" viewBox="0 0 10 12"><path d="M0 0H3L1.5 2Z" fill="#2b7fc8"/><circle cx="5.5" cy="7" r="3.8" fill="none" stroke="#333" stroke-width="1.2"/><path d="M5.5 4.8V7H7.3" fill="none" stroke="#333" stroke-width="1"/></svg>
<svg style="left:880px;top:98px" width="3" height="3"><path d="M0 0H3L1.5 2.5Z" fill="#333"/></svg>
<svg style="left:888px;top:95px" width="9" height="7" viewBox="0 0 9 7"><path d="M0 2H8 M6 0L8 2 M9 5H1 M3 7L1 5" fill="none" stroke="#444" stroke-width="1.1"/></svg>
<svg style="left:903px;top:94px" width="8" height="8" viewBox="0 0 8 8"><path d="M0.7 4.2L4 1L7.3 4.2 M0.7 7.4L4 4.2L7.3 7.4" fill="none" stroke="#444" stroke-width="1.1"/></svg>
<svg style="left:916.5px;top:92.5px" width="10" height="11" viewBox="0 0 10 11"><rect x="3.5" y="0.6" width="6" height="7.5" rx="1" fill="#cfd6ee" stroke="#555" stroke-width="1"/><rect x="0.6" y="2.8" width="6" height="7.6" rx="1" fill="#cfd6ee" stroke="#555" stroke-width="1"/></svg>
<div style="left:931.5px;top:92px;width:1px;height:13px;background:#aeb6d2;"></div>
<div style="left:934.5px;top:92px;width:15px;height:14px;background:#fbe7b0;border:1px solid #d9b978"></div>
<svg style="left:937px;top:94px" width="10" height="10" viewBox="0 0 10 10"><circle cx="2" cy="2" r="1.3" fill="#333"/><path d="M2 2L7 7" stroke="#333" stroke-width="1"/><circle cx="7" cy="7" r="2" fill="#fbe7b0" stroke="#333" stroke-width="1"/></svg>
<svg style="left:951.5px;top:98px" width="3" height="3"><path d="M0 0H3L1.5 2.5Z" fill="#333"/></svg>
<div style="left:959.5px;top:92px;width:1px;height:13px;background:#aeb6d2;"></div>
<svg style="left:964px;top:93px" width="11" height="11" viewBox="0 0 11 11"><path d="M1 10L6 5" stroke="#333" stroke-width="1.8"/><path d="M5 5.5 A3 3 0 1 1 9.8 3 L8 3 L7 1.5 L8 0.3" fill="none" stroke="#333" stroke-width="1.5"/></svg>
<div style="left:976.5px;top:92px;width:15px;height:14px;background:#fbe7b0;border:1px solid #d9b978"></div>
<svg style="left:978.5px;top:95px" width="11" height="8" viewBox="0 0 11 8"><path d="M1 7L3 3H9L10 7Z" fill="#666"/><path d="M8 1 L9 0 M10 2 L11 1.5" stroke="#c9a03a" stroke-width="0.8"/></svg>
<div style="left:840px;top:108.5px;width:181px;height:14.5px;background:#ffffff;border:1px solid #c9cfde"></div>
<div class="t" style="left:844px;top:112.50px;font-size:8.5px;line-height:8.5px;letter-spacing:-0.15px;color:#6d6d6d;">Обозреватель решений — поиск (Ctrl+;)</div>
<svg style="left:1004px;top:110.5px" width="9" height="9" viewBox="0 0 9 9"><circle cx="5.5" cy="3.5" r="2.6" fill="none" stroke="#333" stroke-width="1.1"/><path d="M3.6 5.4 L0.8 8.2" stroke="#333" stroke-width="1.4"/></svg>
<div style="left:1013.5px;top:109.5px;width:1px;height:12.5px;background:#e1e4ec;"></div>
<svg style="left:1015.5px;top:114.5px" width="4" height="3"><path d="M0 0H4L2 2.5Z" fill="#222"/></svg>
<div style="left:1021px;top:108.5px;width:3px;height:15px;background:#d9deef;"></div>
<div style="left:840px;top:123px;width:184px;height:348px;background:#f5f7fd;"></div>
<div style="left:840px;top:137px;width:184px;height:12.5px;background:#e3e6ee;"></div>
<svg style="left:849px;top:126px" width="11" height="11" viewBox="0 0 11 11"><rect x="0.6" y="0.6" width="9.8" height="9.8" fill="none" stroke="#555" stroke-width="1"/><path d="M0.6 3H10.4" stroke="#555" stroke-width="1"/><path d="M4 6L6 8L4 10Z M6 8L9 5V10Z" fill="#8a4fd0"/></svg>
<div class="t" style="left:863.5px;top:127.20px;font-size:8.5px;line-height:8.5px;letter-spacing:-0.3px;color:#454545;">Решение "MyClassLibrary"  (1 проекта 1)</div>
<svg style="left:847px;top:141.5px" width="5" height="5"><path d="M4.5 0.3V4.7H0.3Z" fill="#222"/></svg>
<svg style="left:862.5px;top:139.5px" width="10" height="9" viewBox="0 0 10 9"><rect x="0.6" y="0.6" width="8.8" height="7.8" fill="#dcebd9" stroke="#6d6d6d" stroke-width="1.1"/><path d="M2.5 4.5H5.5" stroke="#8fc48f" stroke-width="1.2"/><circle cx="6.5" cy="4.5" r="1.3" fill="#3f8f45"/></svg>
<div class="t" style="left:876px;top:140.15px;font-size:8.5px;line-height:8.5px;letter-spacing:-0.4px;color:#1e1e1e;font-weight:bold">MyClassLibrary</div>
<svg style="left:859px;top:154.3px" width="5" height="7"><path d="M0.6 0.6L4.2 3.5L0.6 6.4Z" fill="none" stroke="#333" stroke-width="1"/></svg>
<svg style="left:873px;top:151.3px" width="12" height="11" viewBox="0 0 12 11"><rect x="0.5" y="2" width="5" height="3.5" fill="#555"/><rect x="5.5" y="0.5" width="5" height="4" fill="none" stroke="#555"/><path d="M3 6 L6 6" stroke="#555"/><path d="M8 5L11.5 10.5H4.5Z" fill="#e8b43a"/></svg>
<div class="t" style="left:887.5px;top:153.10px;font-size:8.5px;line-height:8.5px;letter-spacing:-0.3px;color:#2d2d2d;">Зависимости</div>
<svg style="left:873px;top:164.75px" width="11" height="10" viewBox="0 0 11 10"><rect x="4" y="0" width="3" height="3" fill="#444"/><path d="M5.5 3V5 M1.5 5H9.5 M1.5 5V7 M5.5 5V7 M9.5 5V7" fill="none" stroke="#444"/><rect x="0" y="7" width="3" height="3" fill="#444"/><rect x="4" y="7" width="3" height="3" fill="#444"/><rect x="8" y="7" width="3" height="3" fill="#444"/></svg>
<div class="t" style="left:887.5px;top:166.05px;font-size:8.5px;line-height:8.5px;letter-spacing:-0.3px;color:#2d2d2d;">ClassDiagram1.cd</div>
<svg style="left:859px;top:180.2px" width="5" height="7"><path d="M0.6 0.6L4.2 3.5L0.6 6.4Z" fill="none" stroke="#333" stroke-width="1"/></svg>
<svg style="left:873.5px;top:180.60px" width="11" height="6" viewBox="0 0 11 6"><path d="M4.2 1.2 Q3.5 0.4 2.5 0.4 Q0.5 0.4 0.5 3 Q0.5 5.6 2.5 5.6 Q3.5 5.6 4.2 4.8" fill="none" stroke="#4a9a55" stroke-width="1.1"/><path d="M6 2H10.5 M6 4.2H10.5 M7.3 0.6V5.5 M9.3 0.6V5.5" stroke="#4a9a55" stroke-width="1"/></svg>
<div class="t" style="left:887.5px;top:179.00px;font-size:8.5px;line-height:8.5px;letter-spacing:-0.3px;color:#2d2d2d;">Discipline.cs</div>
<svg style="left:859px;top:193.15px" width="5" height="7"><path d="M0.6 0.6L4.2 3.5L0.6 6.4Z" fill="none" stroke="#333" stroke-width="1"/></svg>
<svg style="left:873.5px;top:193.55px" width="11" height="6" viewBox="0 0 11 6"><path d="M4.2 1.2 Q3.5 0.4 2.5 0.4 Q0.5 0.4 0.5 3 Q0.5 5.6 2.5 5.6 Q3.5 5.6 4.2 4.8" fill="none" stroke="#4a9a55" stroke-width="1.1"/><path d="M6 2H10.5 M6 4.2H10.5 M7.3 0.6V5.5 M9.3 0.6V5.5" stroke="#4a9a55" stroke-width="1"/></svg>
<div class="t" style="left:887.5px;top:191.95px;font-size:8.5px;line-height:8.5px;letter-spacing:-0.3px;color:#2d2d2d;">Employee.cs</div>
<svg style="left:859px;top:206.1px" width="5" height="7"><path d="M0.6 0.6L4.2 3.5L0.6 6.4Z" fill="none" stroke="#333" stroke-width="1"/></svg>
<svg style="left:873.5px;top:206.50px" width="11" height="6" viewBox="0 0 11 6"><path d="M4.2 1.2 Q3.5 0.4 2.5 0.4 Q0.5 0.4 0.5 3 Q0.5 5.6 2.5 5.6 Q3.5 5.6 4.2 4.8" fill="none" stroke="#4a9a55" stroke-width="1.1"/><path d="M6 2H10.5 M6 4.2H10.5 M7.3 0.6V5.5 M9.3 0.6V5.5" stroke="#4a9a55" stroke-width="1"/></svg>
<div class="t" style="left:887.5px;top:204.90px;font-size:8.5px;line-height:8.5px;letter-spacing:-0.3px;color:#2d2d2d;">MyList.cs</div>
<svg style="left:859px;top:219.05px" width="5" height="7"><path d="M0.6 0.6L4.2 3.5L0.6 6.4Z" fill="none" stroke="#333" stroke-width="1"/></svg>
<svg style="left:873.5px;top:219.45px" width="11" height="6" viewBox="0 0 11 6"><path d="M4.2 1.2 Q3.5 0.4 2.5 0.4 Q0.5 0.4 0.5 3 Q0.5 5.6 2.5 5.6 Q3.5 5.6 4.2 4.8" fill="none" stroke="#4a9a55" stroke-width="1.1"/><path d="M6 2H10.5 M6 4.2H10.5 M7.3 0.6V5.5 M9.3 0.6V5.5" stroke="#4a9a55" stroke-width="1"/></svg>
<div class="t" style="left:887.5px;top:217.85px;font-size:8.5px;line-height:8.5px;letter-spacing:-0.3px;color:#2d2d2d;">Persona.cs</div>
<svg style="left:859px;top:232.0px" width="5" height="7"><path d="M0.6 0.6L4.2 3.5L0.6 6.4Z" fill="none" stroke="#333" stroke-width="1"/></svg>
<svg style="left:873.5px;top:232.40px" width="11" height="6" viewBox="0 0 11 6"><path d="M4.2 1.2 Q3.5 0.4 2.5 0.4 Q0.5 0.4 0.5 3 Q0.5 5.6 2.5 5.6 Q3.5 5.6 4.2 4.8" fill="none" stroke="#4a9a55" stroke-width="1.1"/><path d="M6 2H10.5 M6 4.2H10.5 M7.3 0.6V5.5 M9.3 0.6V5.5" stroke="#4a9a55" stroke-width="1"/></svg>
<div class="t" style="left:887.5px;top:230.80px;font-size:8.5px;line-height:8.5px;letter-spacing:-0.3px;color:#2d2d2d;">Prepod.cs</div>
<svg style="left:859px;top:244.95px" width="5" height="7"><path d="M0.6 0.6L4.2 3.5L0.6 6.4Z" fill="none" stroke="#333" stroke-width="1"/></svg>
<svg style="left:873.5px;top:245.35px" width="11" height="6" viewBox="0 0 11 6"><path d="M4.2 1.2 Q3.5 0.4 2.5 0.4 Q0.5 0.4 0.5 3 Q0.5 5.6 2.5 5.6 Q3.5 5.6 4.2 4.8" fill="none" stroke="#4a9a55" stroke-width="1.1"/><path d="M6 2H10.5 M6 4.2H10.5 M7.3 0.6V5.5 M9.3 0.6V5.5" stroke="#4a9a55" stroke-width="1"/></svg>
<div class="t" style="left:887.5px;top:243.75px;font-size:8.5px;line-height:8.5px;letter-spacing:-0.3px;color:#2d2d2d;">ShowInfo.cs</div>
<svg style="left:859px;top:257.9px" width="5" height="7"><path d="M0.6 0.6L4.2 3.5L0.6 6.4Z" fill="none" stroke="#333" stroke-width="1"/></svg>
<svg style="left:873.5px;top:258.30px" width="11" height="6" viewBox="0 0 11 6"><path d="M4.2 1.2 Q3.5 0.4 2.5 0.4 Q0.5 0.4 0.5 3 Q0.5 5.6 2.5 5.6 Q3.5 5.6 4.2 4.8" fill="none" stroke="#4a9a55" stroke-width="1.1"/><path d="M6 2H10.5 M6 4.2H10.5 M7.3 0.6V5.5 M9.3 0.6V5.5" stroke="#4a9a55" stroke-width="1"/></svg>
<div class="t" style="left:887.5px;top:256.70px;font-size:8.5px;line-height:8.5px;letter-spacing:-0.3px;color:#2d2d2d;">Student.cs</div>
<svg style="left:859px;top:270.85px" width="5" height="7"><path d="M0.6 0.6L4.2 3.5L0.6 6.4Z" fill="none" stroke="#333" stroke-width="1"/></svg>
<svg style="left:873.5px;top:271.25px" width="11" height="6" viewBox="0 0 11 6"><path d="M4.2 1.2 Q3.5 0.4 2.5 0.4 Q0.5 0.4 0.5 3 Q0.5 5.6 2.5 5.6 Q3.5 5.6 4.2 4.8" fill="none" stroke="#4a9a55" stroke-width="1.1"/><path d="M6 2H10.5 M6 4.2H10.5 M7.3 0.6V5.5 M9.3 0.6V5.5" stroke="#4a9a55" stroke-width="1"/></svg>
<div class="t" style="left:887.5px;top:269.65px;font-size:8.5px;line-height:8.5px;letter-spacing:-0.3px;color:#2d2d2d;">StudentDistant.cs</div>
<style>
.code{font-size:9px;line-height:12px;height:12px;letter-spacing:-0.28px;-webkit-text-stroke:0.2px}
.ln{color:#8a8a8a;-webkit-text-stroke:0}
.cl{color:#1f1f1f}
.k{color:#3737b5}
.c{color:#8f32b8}
.ty{color:#4b9aae}
.s{color:#a83232}
.cm{color:#3a8a3a}
.th{color:#a3a3dd}
.me{color:#86672e}
</style></body></html>
